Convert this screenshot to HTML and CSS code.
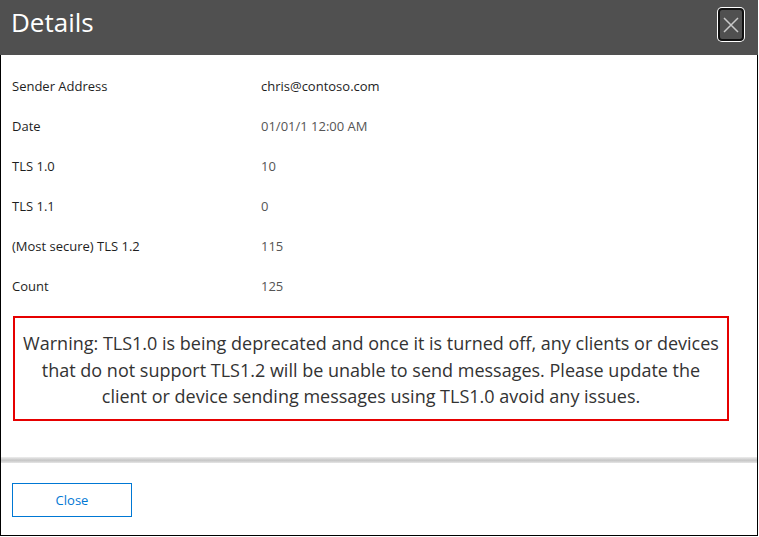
FILE: index.html
```html
<!DOCTYPE html>
<html>
<head>
<meta charset="utf-8">
<link rel="stylesheet" href="styles.css">
</head>
<body>
<div class="dialog">
  <div class="header">
    <div class="title">Details</div>
    <button class="x-btn" aria-label="Close">
      <svg width="16" height="16" viewBox="0 0 16 16"><path d="M1 1 L15 15 M15 1 L1 15" stroke="#c8c8c8" stroke-width="1.5" fill="none"/></svg>
    </button>
  </div>
  <div class="content">
    <div class="rows">
      <div class="row"><span class="label">Sender Address</span><span class="value dark">chris@contoso.com</span></div>
      <div class="row"><span class="label">Date</span><span class="value">01/01/1 12:00 AM</span></div>
      <div class="row"><span class="label">TLS 1.0</span><span class="value">10</span></div>
      <div class="row"><span class="label">TLS 1.1</span><span class="value">0</span></div>
      <div class="row"><span class="label">(Most secure) TLS 1.2</span><span class="value">115</span></div>
      <div class="row"><span class="label">Count</span><span class="value">125</span></div>
    </div>
    <div class="warning">Warning: TLS1.0 is being deprecated and once it is turned off, any clients or devices that do not support TLS1.2 will be unable to send messages. Please update the client or device sending messages using TLS1.0 avoid any issues.</div>
  </div>
  <div class="sep"></div>
  <div class="footer">
    <button class="close-btn">Close</button>
  </div>
</div>
</body>
</html>
```
FILE: styles.css
```css
html, body {
  margin: 0;
  padding: 0;
  background: #ffffff;
}
body {
  font-family: "Open Sans", "Noto Sans", sans-serif;
}
.dialog {
  width: 758px;
  height: 536px;
  box-sizing: border-box;
  border: 1px solid #000;
  border-top: none;
  display: flex;
  flex-direction: column;
  background: #fff;
}
.header {
  height: 55px;
  background: #505050;
  display: flex;
  align-items: center;
  justify-content: space-between;
  padding: 0 14px 0 11px;
  margin: 0 -1px 0 -1px;
}
.title {
  color: #fff;
  font-size: 26px;
  line-height: 1;
  margin-top: -12px;
}
.x-btn {
  width: 26px;
  height: 33px;
  box-sizing: border-box;
  background: #505050;
  border: 2px solid #111;
  border-radius: 4px;
  box-shadow: 0 0 0 1px #fff;
  padding: 0;
  display: flex;
  align-items: center;
  justify-content: center;
  margin-top: -6px;
}
.x-btn svg { display: block; }
.content {
  flex: 1;
  padding: 11px 0 0 11px;
}
.rows {
  display: flex;
  flex-direction: column;
}
.row {
  height: 40px;
  display: flex;
  align-items: center;
  font-size: 13px;
}
.label {
  width: 249px;
  color: #1e1e1e;
}
.value {
  color: #555;
}
.value.dark {
  color: #1e1e1e;
}
.warning {
  margin: 10px 0 0 1px;
  width: 716px;
  box-sizing: border-box;
  border: 2px solid #e60000;
  padding: 12px 5px 9px;
  text-align: center;
  font-size: 18px;
  line-height: 26.5px;
  color: #333;
}
.sep {
  height: 6px;
  background: linear-gradient(to bottom, #eeeeee, #cfcfcf 40%, #c8c8c8 60%, #e6e6e6);
}
.footer {
  height: 72px;
  padding: 20px 0 0 11px;
  box-sizing: border-box;
}
.close-btn {
  width: 120px;
  height: 34px;
  background: #fff;
  border: 1px solid #0078d4;
  color: #0078d4;
  font-family: "Open Sans", "Noto Sans", sans-serif;
  font-size: 13px;
  padding: 0;
  border-radius: 0;
}
```
